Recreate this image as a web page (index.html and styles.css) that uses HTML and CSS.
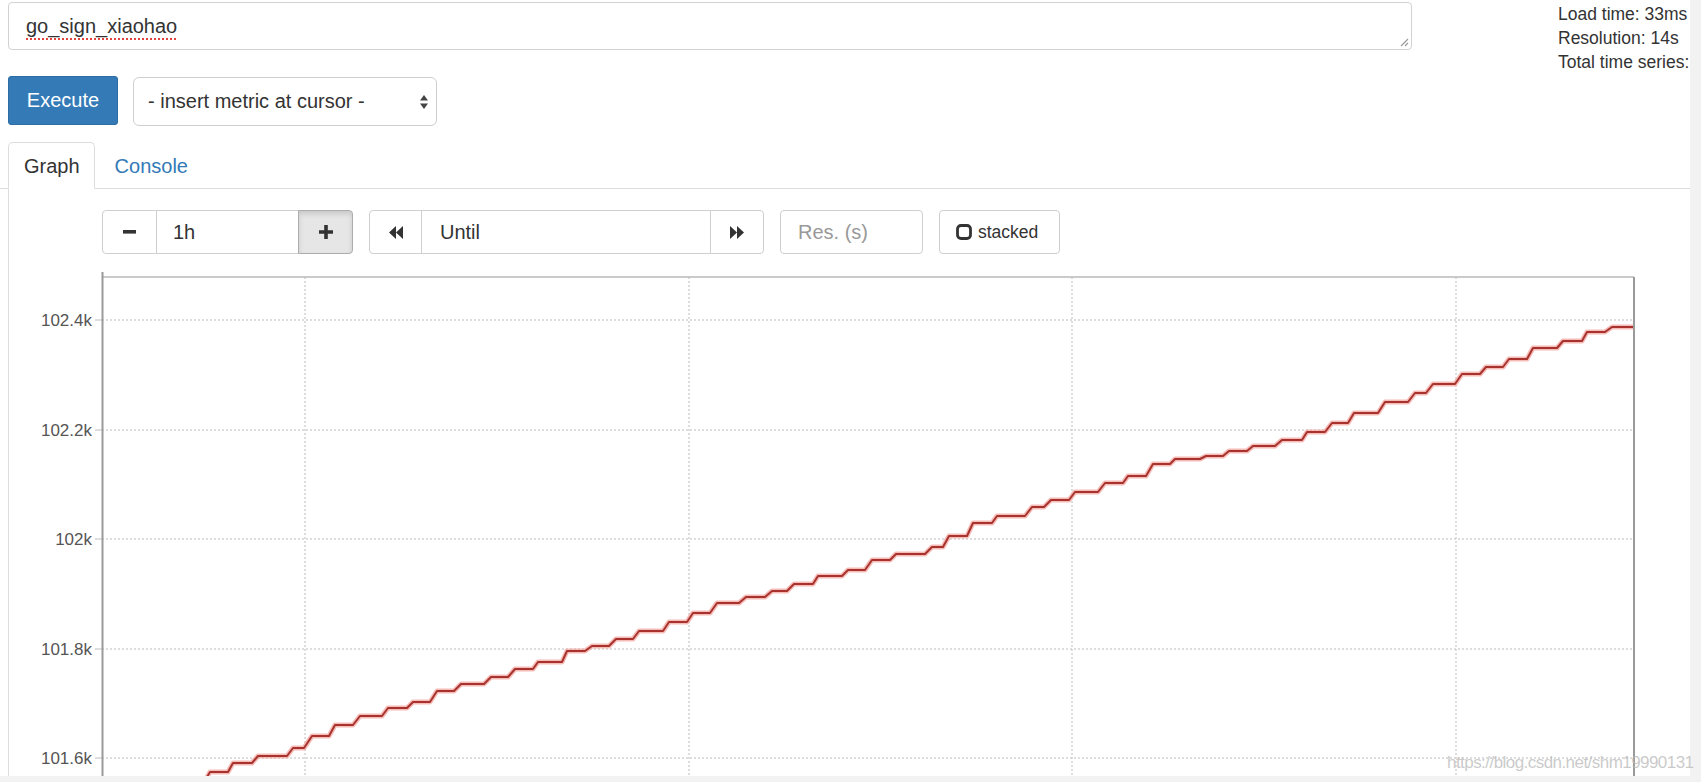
FILE: index.html
```html
<!DOCTYPE html>
<html>
<head>
<meta charset="utf-8">
<title>Prometheus Graph</title>
<link rel="stylesheet" href="styles.css">
</head>
<body>
<div class="page">
  <div class="top">
    <div class="left-col">
      <div class="query">
        <span class="word">go_sign_xiaohao</span>
        <svg class="grip" width="10" height="10" viewBox="0 0 10 10"><path d="M9 2 L2 9 M9 6 L6 9"/></svg>
      </div>
      <div class="actions">
        <button class="execute">Execute</button>
        <div class="select">
          <span>- insert metric at cursor -</span>
          <svg class="updown" width="8" height="14" viewBox="0 0 8 14"><path d="M4 0 L8 5.5 L0 5.5 Z M4 14 L8 8.5 L0 8.5 Z"/></svg>
        </div>
      </div>
    </div>
    <div class="stats">
      <div>Load time: 33ms</div>
      <div>Resolution: 14s</div>
      <div>Total time series:</div>
    </div>
  </div>

  <div class="tabs">
    <div class="tab active">Graph</div>
    <div class="tab link">Console</div>
  </div>

  <div class="panel">
    <div class="controls">
      <div class="group">
        <div class="btn first w55"><svg width="13" height="4" viewBox="0 0 13 4"><rect class="ico" width="13" height="3.6"/></svg></div>
        <div class="field w143 pl16">1h</div>
        <div class="btn last w55 pressed"><svg width="14" height="14" viewBox="0 0 14 14"><path class="ico" d="M5.2 0 H8.8 V5.2 H14 V8.8 H8.8 V14 H5.2 V8.8 H0 V5.2 H5.2 Z"/></svg></div>
      </div>
      <div class="group">
        <div class="btn first w53"><svg width="14" height="13" viewBox="0 0 14 13"><path class="ico" d="M7 0 L0 6.5 L7 13 Z M14 0 L7 6.5 L14 13 Z"/></svg></div>
        <div class="field w290 pl18">Until</div>
        <div class="btn last w54"><svg width="14" height="13" viewBox="0 0 14 13"><path class="ico" d="M0 0 L7 6.5 L0 13 Z M7 0 L14 6.5 L7 13 Z"/></svg></div>
      </div>
      <div class="group">
        <div class="field solo w143 pl17 placeholder">Res. (s)</div>
      </div>
      <div class="group">
        <div class="btn solo stacked"><svg width="16" height="16" viewBox="0 0 16 16"><rect class="box" x="1.5" y="1.5" width="13" height="13" rx="3.5"/></svg><span>stacked</span></div>
      </div>
    </div>

    <svg class="chart" width="1681" height="511" viewBox="9 265 1681 511">
      <g class="grid">
        <line x1="102" y1="320" x2="1634" y2="320"/>
        <line x1="102" y1="430" x2="1634" y2="430"/>
        <line x1="102" y1="539" x2="1634" y2="539"/>
        <line x1="102" y1="649" x2="1634" y2="649"/>
        <line x1="102" y1="758" x2="1634" y2="758"/>
        <line x1="305" y1="277" x2="305" y2="776"/>
        <line x1="689" y1="277" x2="689" y2="776"/>
        <line x1="1072" y1="277" x2="1072" y2="776"/>
        <line x1="1456" y1="277" x2="1456" y2="776"/>
      </g>
      <g class="ticks">
        <line x1="95" y1="320" x2="102" y2="320"/>
        <line x1="95" y1="430" x2="102" y2="430"/>
        <line x1="95" y1="539" x2="102" y2="539"/>
        <line x1="95" y1="649" x2="102" y2="649"/>
        <line x1="95" y1="758" x2="102" y2="758"/>
      </g>
      <g class="labels">
        <text x="92" y="320">102.4k</text>
        <text x="92" y="430">102.2k</text>
        <text x="92" y="539">102k</text>
        <text x="92" y="649">101.8k</text>
        <text x="92" y="758">101.6k</text>
      </g>
      <line class="frame" x1="102" y1="277" x2="1634" y2="277"/>
      <line class="axis" x1="102.5" y1="272" x2="102.5" y2="776"/>
      <line class="axis right" x1="1634" y1="277" x2="1634" y2="776"/>
      <path class="series-halo" d="M207,777 L210,772 H228 L233,763 H252 L258,756 H287 L293,748 H304 L312,736 H329 L335,725 H353 L360,716 H382 L388,708 H407 L413,702 H430 L437,691 H454 L461,684 H484 L491,677 H508 L515,669 H533 L538,662 H562 L567,651 H585 L592,646 H609 L616,639 H633 L639,631 H663 L669,622 H687 L693,613 H710 L717,603 H739 L746,597 H765 L772,591 H787 L794,584 H813 L818,576 H842 L848,570 H865 L872,560 H890 L896,554 H925 L932,547 H943 L949,536 H967 L973,523 H992 L997,516 H1025 L1032,507 H1044 L1051,500 H1069 L1075,492 H1098 L1105,483 H1123 L1128,476 H1146 L1153,464 H1170 L1175,459 H1200 L1206,456 H1223 L1229,451 H1247 L1253,446 H1275 L1282,440 H1302 L1307,432 H1325 L1332,423 H1348 L1354,413 H1378 L1385,402 H1408 L1415,393 H1426 L1433,384 H1455 L1462,374 H1480 L1486,367 H1503 L1509,359 H1527 L1533,348 H1557 L1563,341 H1582 L1587,332 H1605 L1612,327 H1633"/>
      <path class="series" d="M207,777 L210,772 H228 L233,763 H252 L258,756 H287 L293,748 H304 L312,736 H329 L335,725 H353 L360,716 H382 L388,708 H407 L413,702 H430 L437,691 H454 L461,684 H484 L491,677 H508 L515,669 H533 L538,662 H562 L567,651 H585 L592,646 H609 L616,639 H633 L639,631 H663 L669,622 H687 L693,613 H710 L717,603 H739 L746,597 H765 L772,591 H787 L794,584 H813 L818,576 H842 L848,570 H865 L872,560 H890 L896,554 H925 L932,547 H943 L949,536 H967 L973,523 H992 L997,516 H1025 L1032,507 H1044 L1051,500 H1069 L1075,492 H1098 L1105,483 H1123 L1128,476 H1146 L1153,464 H1170 L1175,459 H1200 L1206,456 H1223 L1229,451 H1247 L1253,446 H1275 L1282,440 H1302 L1307,432 H1325 L1332,423 H1348 L1354,413 H1378 L1385,402 H1408 L1415,393 H1426 L1433,384 H1455 L1462,374 H1480 L1486,367 H1503 L1509,359 H1527 L1533,348 H1557 L1563,341 H1582 L1587,332 H1605 L1612,327 H1633"/>
    </svg>
  </div>
</div>
<div class="watermark">https://blog.csdn.net/shm19990131</div>
</body>
</html>
```

FILE: styles.css
```css
* { box-sizing: border-box; }

body {
  margin: 0;
  width: 1701px;
  height: 782px;
  overflow: hidden;
  position: relative;
  background: #f2f2f2;
  font-family: "Liberation Sans", Arial, sans-serif;
  color: #333;
}

.page {
  width: 1690px;
  height: 776px;
  background: #fff;
  overflow: hidden;
}

/* ---------- top area ---------- */
.top {
  display: flex;
  padding: 2px 0 0 8px;
}

.left-col { width: 1404px; }

.query {
  position: relative;
  height: 48px;
  border: 1px solid #d2d2d2;
  border-radius: 4px;
  padding-left: 17px;
  font-size: 20px;
  line-height: 46px;
  color: #333;
}

.query .word {
  text-decoration: underline dotted #e0443c;
  text-decoration-thickness: 2px;
  text-underline-offset: 5px;
}

.grip {
  position: absolute;
  right: 2px;
  bottom: 2px;
}
.grip path { stroke: #9a9a9a; stroke-width: 1.2; fill: none; }

.actions {
  display: flex;
  align-items: flex-start;
  margin-top: 26px;
  height: 50px;
}

.execute {
  width: 110px;
  height: 49px;
  padding: 0;
  background: #337ab7;
  border: 1px solid #2e6da4;
  border-radius: 3px;
  color: #fff;
  font-family: "Liberation Sans", Arial, sans-serif;
  font-size: 20px;
}

.select {
  margin-left: 15px;
  margin-top: 1px;
  width: 304px;
  height: 49px;
  border: 1px solid #cfcfcf;
  border-radius: 6px;
  display: flex;
  align-items: center;
  justify-content: space-between;
  padding: 0 8px 0 14px;
  font-size: 20px;
  color: #333;
}
.updown path { fill: #444; }

.stats {
  margin-left: auto;
  width: 132px;
  font-size: 17.5px;
  line-height: 24px;
  color: #333;
  white-space: nowrap;
}

/* ---------- tabs ---------- */
.tabs {
  display: flex;
  margin-top: 16px;
  padding-left: 8px;
  height: 47px;
  border-bottom: 1px solid #ddd;
}

.tab {
  height: 47px;
  margin-bottom: -1px;
  padding: 0 14px 0 15px;
  border: 1px solid transparent;
  border-radius: 5px 5px 0 0;
  font-size: 20px;
  line-height: 46px;
  color: #333;
}

.tab.active {
  border-color: #ddd;
  border-bottom-color: #fff;
  background: #fff;
}

.tab.link {
  margin-left: 2px;
  padding-left: 17px;
  color: #337ab7;
}

/* ---------- panel ---------- */
.panel {
  margin-left: 8px;
  border-left: 1px solid #ddd;
  height: 587px;
}

.controls {
  display: flex;
  padding: 21px 0 0 93px;
  height: 65px;
}

.group {
  display: flex;
  margin-left: 16px;
}
.group:first-child { margin-left: 0; }

.btn, .field {
  height: 44px;
  border: 1px solid #cfcfcf;
  background: #fff;
}

.btn {
  display: flex;
  align-items: center;
  justify-content: center;
}

.field {
  display: flex;
  align-items: center;
  margin-left: -1px;
  font-size: 20px;
  color: #333;
}

.btn.last { margin-left: -1px; }

.first { border-radius: 4px 0 0 4px; }
.last { border-radius: 0 4px 4px 0; }
.solo { border-radius: 4px; margin-left: 0; }

.w53 { width: 53px; }
.w54 { width: 54px; }
.w55 { width: 55px; }
.w143 { width: 143px; }
.w290 { width: 290px; }
.pl16 { padding-left: 16px; }
.pl17 { padding-left: 17px; }
.pl18 { padding-left: 18px; }

.placeholder { color: #999; }

.pressed {
  background: #e6e6e6;
  border-color: #adadad;
  box-shadow: inset 0 3px 5px rgba(0, 0, 0, 0.125);
}

.ico { fill: #333; }

.stacked {
  width: 121px;
  justify-content: flex-start;
  padding-left: 16px;
  gap: 6px;
  font-size: 17.5px;
  color: #333;
}
.box { fill: none; stroke: #333; stroke-width: 2.8; }

/* ---------- chart ---------- */
.chart { display: block; margin-top: 11px; }

.grid line {
  stroke: #d2d2d2;
  stroke-width: 1.5;
  stroke-dasharray: 2 2;
}

.ticks line { stroke: #bdbdbd; stroke-width: 1; }

.labels text {
  font-family: "Liberation Sans", Arial, sans-serif;
  font-size: 17px;
  fill: #555;
  text-anchor: end;
  dominant-baseline: central;
}

.frame { stroke: #b8b8b8; stroke-width: 1.5; }
.axis { stroke: #9a9a9a; stroke-width: 2; }

.series-halo {
  fill: none;
  stroke: #f2aaa5;
  stroke-width: 5;
  stroke-linejoin: round;
  opacity: 0.8;
}

.series {
  fill: none;
  stroke: #a8332e;
  stroke-width: 2;
  stroke-linejoin: round;
}

/* ---------- watermark ---------- */
.watermark {
  position: absolute;
  left: 1447px;
  top: 753px;
  font-size: 17px;
  letter-spacing: -0.55px;
  color: rgba(185, 185, 185, 0.75);
  white-space: nowrap;
}
```
